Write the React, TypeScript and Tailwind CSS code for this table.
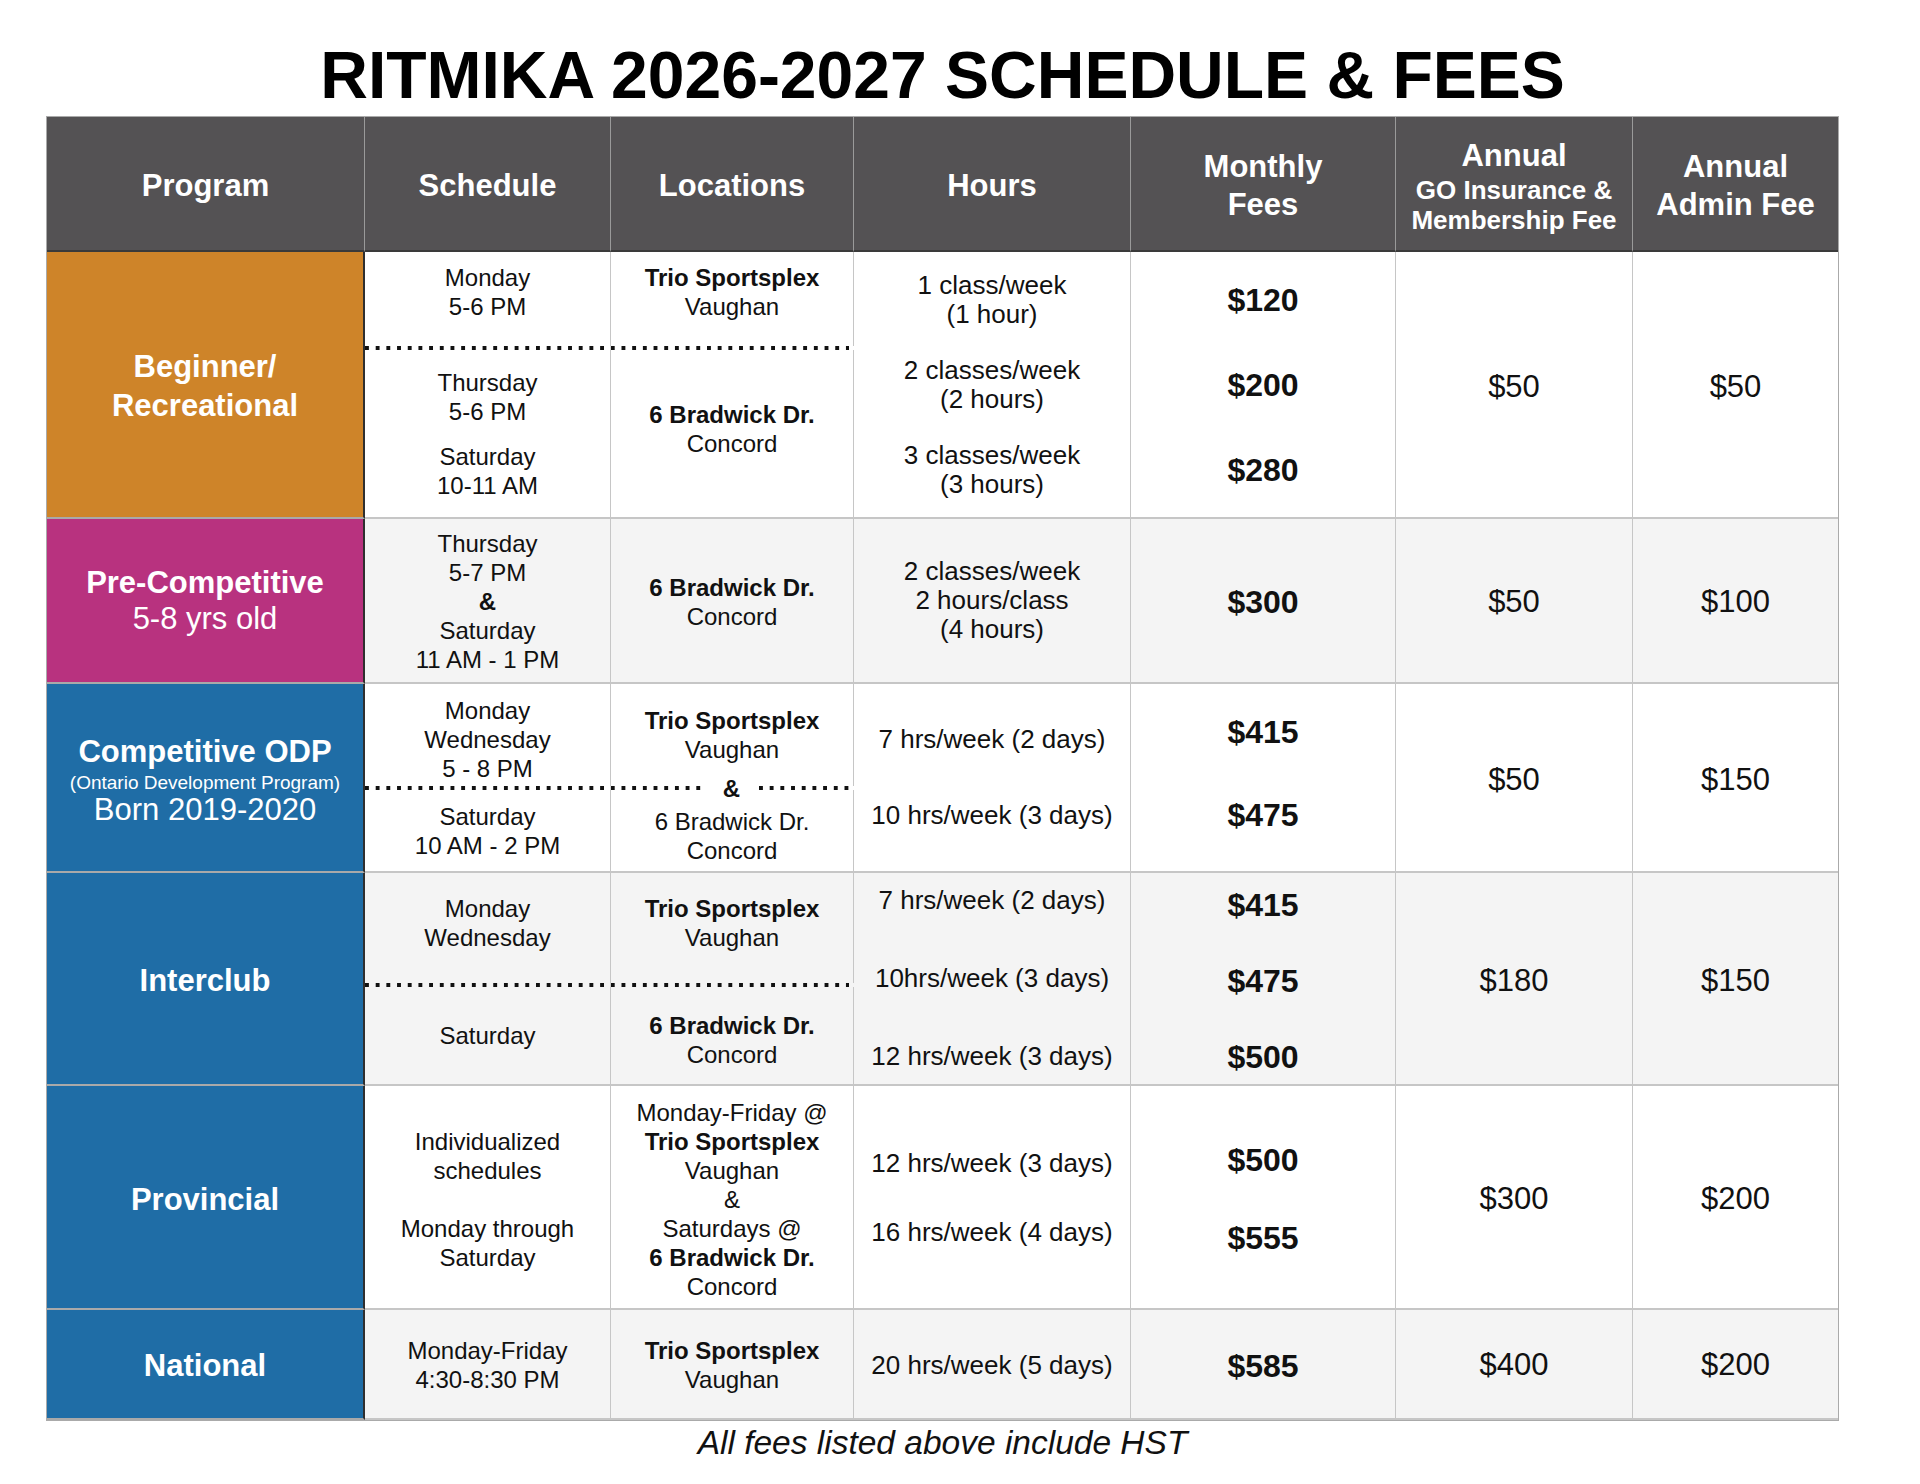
import React from 'react';

// dotted divider used inside the schedule/location cells
const dots =
  'h-[4px] bg-[linear-gradient(to_right,#111_0,#111_4px,transparent_4px)] bg-[length:10.7px_4px] bg-repeat-x';

const Head: React.FC<{ children: React.ReactNode; last?: boolean }> = ({ children, last }) => (
  <div
    className={`flex flex-col items-center justify-center border-b-2 border-[#3a3a3a] bg-[#545254] pt-[5px] text-center text-[31px] font-bold leading-[38px] text-white ${
      last ? '' : 'border-r border-r-[#9a9a9a]'
    }`}
  >
    {children}
  </div>
);

const Prog: React.FC<{ bg: string; children: React.ReactNode; className?: string }> = ({
  bg,
  children,
  className = '',
}) => (
  <div
    className={`flex flex-col items-center justify-center border-r-2 border-b-2 border-r-[#2f2f2f] border-b-[#a9a9a9] text-center text-white ${bg} ${className}`}
  >
    {children}
  </div>
);

const Cell: React.FC<{ children: React.ReactNode; bg: string; last?: boolean; className?: string }> = ({
  children,
  bg,
  last,
  className = '',
}) => (
  <div
    className={`flex flex-col items-center justify-center border-b-2 border-[#c6c6c6] text-center ${
      last ? '' : 'border-r'
    } ${bg} ${className}`}
  >
    {children}
  </div>
);

const Price: React.FC<{ children: React.ReactNode }> = ({ children }) => (
  <div className="text-[32px] font-bold leading-[36px]">{children}</div>
);

const Fee: React.FC<{ children: React.ReactNode }> = ({ children }) => (
  <div className="text-[31px] leading-[36px]">{children}</div>
);

const App: React.FC = () => {
  return (
    <div className="h-[1484px] w-[1920px] overflow-hidden bg-white font-['Liberation_Sans',Arial,Helvetica,sans-serif] text-[#111]">
      {/* Title */}
      <div className="ml-[47px] w-[1791px] pt-[43px]">
        <h1 className="text-center text-[66px] font-bold leading-[65px] text-black">
          RITMIKA 2026-2027 SCHEDULE &amp; FEES
        </h1>
      </div>

      {/* Table */}
      <div className="ml-[47px] mt-[9px] grid w-[1791px] grid-cols-[318px_246px_243px_277px_265px_237px_205px] grid-rows-[135px_267px_165px_189px_213px_224px_110px] text-[24px] leading-[29px] ring-1 ring-[#aaaaaa]">
        {/* Header */}
        <Head>Program</Head>
        <Head>Schedule</Head>
        <Head>Locations</Head>
        <Head>Hours</Head>
        <Head>
          <div>Monthly</div>
          <div>Fees</div>
        </Head>
        <Head>
          <div className="leading-[38px]">Annual</div>
          <div className="text-[26px] leading-[30px]">GO Insurance &amp;</div>
          <div className="text-[26px] leading-[30px]">Membership Fee</div>
        </Head>
        <Head last>
          <div>Annual</div>
          <div>Admin Fee</div>
        </Head>

        {/* Beginner / Recreational */}
        <Prog bg="bg-[#ce8429]" className="pt-[3px] text-[31px] font-bold leading-[39px]">
          <div>Beginner/</div>
          <div>Recreational</div>
        </Prog>
        <div className="col-span-2 flex flex-col border-b-2 border-[#c6c6c6] bg-white">
          <div className="flex h-[94px]">
            <div className="w-[246px] border-r border-[#c6c6c6] pt-[11px] text-center">
              <div>Monday</div>
              <div>5-6 PM</div>
            </div>
            <div className="w-[243px] border-r border-[#c6c6c6] pt-[11px] text-center">
              <div className="font-bold">Trio Sportsplex</div>
              <div>Vaughan</div>
            </div>
          </div>
          <div className={`${dots} mr-[5px]`} />
          <div className="flex flex-1">
            <div className="flex w-[246px] flex-col justify-center border-r border-[#c6c6c6] text-center">
              <div>Thursday</div>
              <div>5-6 PM</div>
              <div className="mt-[16px]">Saturday</div>
              <div>10-11 AM</div>
            </div>
            <div className="flex w-[243px] flex-col justify-center border-r border-[#c6c6c6] pb-[10px] text-center">
              <div className="font-bold">6 Bradwick Dr.</div>
              <div>Concord</div>
            </div>
          </div>
        </div>
        <Cell bg="bg-white" className="gap-[27px] text-[26px] leading-[29px]">
          <div>
            <div>1 class/week</div>
            <div>(1 hour)</div>
          </div>
          <div>
            <div>2 classes/week</div>
            <div>(2 hours)</div>
          </div>
          <div>
            <div>3 classes/week</div>
            <div>(3 hours)</div>
          </div>
        </Cell>
        <Cell bg="bg-white" className="gap-[27px]">
          <div className="flex h-[58px] items-center">
            <Price>$120</Price>
          </div>
          <div className="flex h-[58px] items-center">
            <Price>$200</Price>
          </div>
          <div className="flex h-[58px] items-center">
            <Price>$280</Price>
          </div>
        </Cell>
        <Cell bg="bg-white" className="pt-[4px]">
          <Fee>$50</Fee>
        </Cell>
        <Cell bg="bg-white" last className="pt-[4px]">
          <Fee>$50</Fee>
        </Cell>

        {/* Pre-Competitive */}
        <Prog bg="bg-[#b8327f]" className="text-[31px] leading-[36px]">
          <div className="font-bold">Pre-Competitive</div>
          <div>5-8 yrs old</div>
        </Prog>
        <Cell bg="bg-[#f4f4f4]" className="pt-[2px]">
          <div>Thursday</div>
          <div>5-7 PM</div>
          <div className="font-bold">&amp;</div>
          <div>Saturday</div>
          <div>11 AM - 1 PM</div>
        </Cell>
        <Cell bg="bg-[#f4f4f4]" className="pt-[2px]">
          <div className="font-bold">6 Bradwick Dr.</div>
          <div>Concord</div>
        </Cell>
        <Cell bg="bg-[#f4f4f4]" className="text-[26px] leading-[29px]">
          <div>2 classes/week</div>
          <div>2 hours/class</div>
          <div>(4 hours)</div>
        </Cell>
        <Cell bg="bg-[#f4f4f4]" className="pt-[2px]">
          <Price>$300</Price>
        </Cell>
        <Cell bg="bg-[#f4f4f4]" className="pt-[2px]">
          <Fee>$50</Fee>
        </Cell>
        <Cell bg="bg-[#f4f4f4]" last className="pt-[2px]">
          <Fee>$100</Fee>
        </Cell>

        {/* Competitive ODP */}
        <Prog bg="bg-[#1f6da6]" className="pt-[3px]">
          <div className="text-[31px] font-bold leading-[40px]">Competitive ODP</div>
          <div className="text-[19px] leading-[22px]">(Ontario Development Program)</div>
          <div className="text-[31px] leading-[32px]">Born 2019-2020</div>
        </Prog>
        <div className="col-span-2 flex flex-col border-b-2 border-[#c6c6c6] bg-white">
          <div className="flex h-[102px]">
            <div className="flex w-[246px] flex-col justify-center border-r border-[#c6c6c6] pt-[8px] text-center">
              <div>Monday</div>
              <div>Wednesday</div>
              <div>5 - 8 PM</div>
            </div>
            <div className="flex w-[243px] flex-col justify-center border-r border-[#c6c6c6] text-center">
              <div className="font-bold">Trio Sportsplex</div>
              <div>Vaughan</div>
            </div>
          </div>
          <div className="mr-[4px] flex h-[4px] items-center">
            <div className={`${dots} w-[339px]`} />
            <span className="w-[55px] text-center font-bold leading-[29px]">&amp;</span>
            <div className={`${dots} w-[90px]`} />
          </div>
          <div className="flex flex-1">
            <div className="flex w-[246px] flex-col justify-center border-r border-[#c6c6c6] text-center">
              <div>Saturday</div>
              <div>10 AM - 2 PM</div>
            </div>
            <div className="flex w-[243px] flex-col justify-center border-r border-[#c6c6c6] pt-[10px] text-center">
              <div>6 Bradwick Dr.</div>
              <div>Concord</div>
            </div>
          </div>
        </div>
        <Cell bg="bg-white" className="gap-[47px] text-[26px] leading-[29px]">
          <div>7 hrs/week (2 days)</div>
          <div>10 hrs/week (3 days)</div>
        </Cell>
        <Cell bg="bg-white" className="gap-[47px] pb-[9px]">
          <Price>$415</Price>
          <Price>$475</Price>
        </Cell>
        <Cell bg="bg-white" className="pt-[4px]">
          <Fee>$50</Fee>
        </Cell>
        <Cell bg="bg-white" last className="pt-[4px]">
          <Fee>$150</Fee>
        </Cell>

        {/* Interclub */}
        <Prog bg="bg-[#1f6da6]" className="pt-[4px] text-[31px] font-bold leading-[39px]">
          <div>Interclub</div>
        </Prog>
        <div className="col-span-2 flex flex-col border-b-2 border-[#c6c6c6] bg-[#f4f4f4]">
          <div className="flex h-[110px]">
            <div className="flex w-[246px] flex-col justify-center border-r border-[#c6c6c6] pb-[10px] text-center">
              <div>Monday</div>
              <div>Wednesday</div>
            </div>
            <div className="flex w-[243px] flex-col justify-center border-r border-[#c6c6c6] pb-[10px] text-center">
              <div className="font-bold">Trio Sportsplex</div>
              <div>Vaughan</div>
            </div>
          </div>
          <div className={`${dots} mr-[5px]`} />
          <div className="flex flex-1">
            <div className="flex w-[246px] flex-col justify-center border-r border-[#c6c6c6] text-center">
              <div>Saturday</div>
            </div>
            <div className="flex w-[243px] flex-col justify-center border-r border-[#c6c6c6] pt-[8px] text-center">
              <div className="font-bold">6 Bradwick Dr.</div>
              <div>Concord</div>
            </div>
          </div>
        </div>
        <Cell bg="bg-[#f4f4f4]" className="gap-[49px] text-[26px] leading-[29px]">
          <div>7 hrs/week (2 days)</div>
          <div>10hrs/week (3 days)</div>
          <div>12 hrs/week (3 days)</div>
        </Cell>
        <Cell bg="bg-[#f4f4f4]" className="gap-[40px] pt-[4px]">
          <Price>$415</Price>
          <Price>$475</Price>
          <Price>$500</Price>
        </Cell>
        <Cell bg="bg-[#f4f4f4]" className="pt-[4px]">
          <Fee>$180</Fee>
        </Cell>
        <Cell bg="bg-[#f4f4f4]" last className="pt-[4px]">
          <Fee>$150</Fee>
        </Cell>

        {/* Provincial */}
        <Prog bg="bg-[#1f6da6]" className="pt-[4px] text-[31px] font-bold leading-[39px]">
          <div>Provincial</div>
        </Prog>
        <Cell bg="bg-white" className="pt-[4px]">
          <div>Individualized</div>
          <div>schedules</div>
          <div className="mt-[29px]">Monday through</div>
          <div>Saturday</div>
        </Cell>
        <Cell bg="bg-white" className="pt-[4px]">
          <div>Monday-Friday @</div>
          <div className="font-bold">Trio Sportsplex</div>
          <div>Vaughan</div>
          <div>&amp;</div>
          <div>Saturdays @</div>
          <div className="font-bold">6 Bradwick Dr.</div>
          <div>Concord</div>
        </Cell>
        <Cell bg="bg-white" className="gap-[40px] pt-[2px] text-[26px] leading-[29px]">
          <div>12 hrs/week (3 days)</div>
          <div>16 hrs/week (4 days)</div>
        </Cell>
        <Cell bg="bg-white" className="gap-[42px] pt-[4px]">
          <Price>$500</Price>
          <Price>$555</Price>
        </Cell>
        <Cell bg="bg-white" className="pt-[4px]">
          <Fee>$300</Fee>
        </Cell>
        <Cell bg="bg-white" last className="pt-[4px]">
          <Fee>$200</Fee>
        </Cell>

        {/* National */}
        <Prog bg="bg-[#1f6da6]" className="pt-[2px] text-[31px] font-bold leading-[39px]">
          <div>National</div>
        </Prog>
        <Cell bg="bg-[#f4f4f4]" className="pt-[2px]">
          <div>Monday-Friday</div>
          <div>4:30-8:30 PM</div>
        </Cell>
        <Cell bg="bg-[#f4f4f4]" className="pt-[2px]">
          <div className="font-bold">Trio Sportsplex</div>
          <div>Vaughan</div>
        </Cell>
        <Cell bg="bg-[#f4f4f4]" className="pt-[2px] text-[26px] leading-[29px]">
          <div>20 hrs/week (5 days)</div>
        </Cell>
        <Cell bg="bg-[#f4f4f4]" className="pt-[4px]">
          <Price>$585</Price>
        </Cell>
        <Cell bg="bg-[#f4f4f4]" className="pt-[2px]">
          <Fee>$400</Fee>
        </Cell>
        <Cell bg="bg-[#f4f4f4]" last className="pt-[2px]">
          <Fee>$200</Fee>
        </Cell>
      </div>

      {/* Footnote */}
      <p className="ml-[47px] mt-[3px] w-[1791px] text-center text-[33.5px] italic leading-[40px]">
        All fees listed above include HST
      </p>
    </div>
  );
};

export default App;
